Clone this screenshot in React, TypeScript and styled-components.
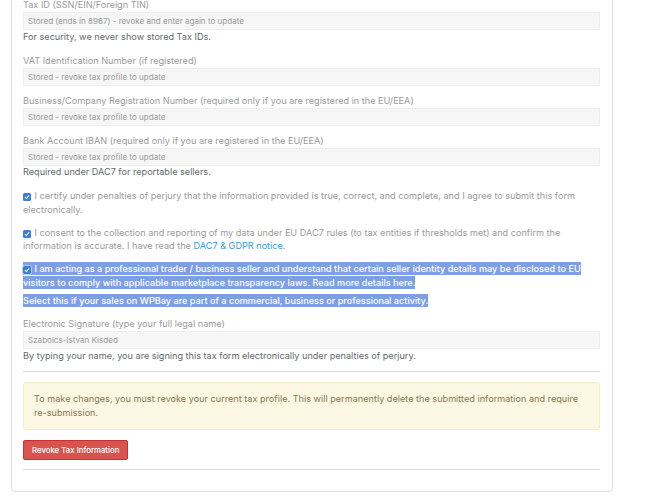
import React from 'react';
import styled, { createGlobalStyle } from 'styled-components';

const GlobalStyle = createGlobalStyle`
  body {
    margin: 0;
    background: #fff;
    font-family: 'Inter', 'Liberation Sans', sans-serif;
  }
`;

const Page = styled.div`
  padding: 0 33px 8px 11px;
  overflow: hidden;
`;

// the panel is scrolled, its top edge is out of view
const Card = styled.div`
  margin-top: -20px;
  border: 1px solid #dcdcdc;
  border-radius: 0 0 4px 4px;
  padding: 17px 12px 21px 11px;
  background: #fff;
`;

const Field = styled.div<{ $gap: number }>`
  margin-bottom: ${(p) => p.$gap}px;
`;

const Label = styled.div`
  font-size: 9.13px;
  line-height: 13px;
  color: #9a9a9a;
  margin-bottom: 1px;
`;

const Input = styled.div`
  box-sizing: border-box;
  height: 18px;
  padding: 0 4px;
  display: flex;
  align-items: center;
  background: #f6f6f6;
  border: 1px solid #eeeeee;
  font-size: 8.05px;
  color: #9a9a9a;
`;

const Help = styled.div`
  font-size: 9.13px;
  line-height: 13px;
  margin-top: -0.5px;
  color: #626a6a;
`;

const Check = styled.p<{ $selected?: boolean }>`
  margin: 0 0 ${(p) => (p.$selected ? '5px' : '9.5px')};
  font-size: 9.13px;
  line-height: 13.5px;
  color: ${(p) => (p.$selected ? '#fff' : '#9a9a9a')};
  font-weight: ${(p) => (p.$selected ? 500 : 400)};
`;

const Selected = styled.span`
  background: #7f9fe3;
  color: #fff;
  padding: 1px 0;
`;

const Box = styled.span<{ $selected?: boolean }>`
  display: inline-flex;
  align-items: center;
  justify-content: center;
  box-sizing: border-box;
  width: 8px;
  height: 8px;
  margin-right: 3.5px;
  border-radius: 1.5px;
  background: #3c7fd9;
  outline: ${(p) => (p.$selected ? '1px solid #b9cdf3' : 'none')};
  vertical-align: -1px;
`;

const Link = styled.a`
  color: #3a97d4;
  text-decoration: none;
`;

const Note = styled.p`
  margin: 0 0 10px;
  font-size: 9.13px;
  font-weight: 500;
  line-height: 13px;
`;

const Rule = styled.hr`
  border: none;
  border-top: 1px solid #d9d9d9;
  margin: 0;
`;

const Alert = styled.div`
  margin: 10px 0 10px;
  padding: 9px 10px;
  background: #fcf7e2;
  border: 1px solid #f6ecc9;
  border-radius: 3px;
  font-size: 9.13px;
  line-height: 14px;
  color: #8a7753;
`;

const NoBreak = styled.span`
  white-space: nowrap;
`;

const Button = styled.button`
  display: block;
  height: 20px;
  padding: 0 8px;
  margin-bottom: 9px;
  background: #d9534f;
  border: 1px solid #c8322e;
  border-radius: 2px;
  color: #fff;
  font-family: 'Inter', 'Liberation Sans', sans-serif;
  font-size: 7.8px;
  font-weight: 500;
`;

const Tick: React.FC<{ selected?: boolean }> = ({ selected }) => (
  <Box $selected={selected}>
    <svg width="6" height="6" viewBox="0 0 10 10">
      <path d="M1.5 5.2 L4 7.6 L8.6 2.4" fill="none" stroke="#fff" strokeWidth="1.8" />
    </svg>
  </Box>
);

const fields = [
  {
    label: 'Tax ID (SSN/EIN/Foreign TIN)',
    value: 'Stored (ends in 8967) - revoke and enter again to update',
    help: 'For security, we never show stored Tax IDs.',
    gap: 11,
  },
  { label: 'VAT Identification Number (if registered)', value: 'Stored - revoke tax profile to update', gap: 8 },
  {
    label: 'Business/Company Registration Number (required only if you are registered in the EU/EEA)',
    value: 'Stored - revoke tax profile to update',
    gap: 8,
  },
  {
    label: 'Bank Account IBAN (required only if you are registered in the EU/EEA)',
    value: 'Stored - revoke tax profile to update',
    help: 'Required under DAC7 for reportable sellers.',
    gap: 11,
  },
];

const App: React.FC = () => {
  return (
    <Page>
      <GlobalStyle />
      <Card>
        {fields.map((f) => (
          <Field key={f.label} $gap={f.gap}>
            <Label>{f.label}</Label>
            <Input>{f.value}</Input>
            {f.help && <Help>{f.help}</Help>}
          </Field>
        ))}

        <Check>
          <Tick />
          I certify under penalties of perjury that the information provided is true, correct, and complete, and I
          agree to submit this form electronically.
        </Check>
        <Check>
          <Tick />
          I consent to the collection and reporting of my data under EU DAC7 rules (to tax entities if thresholds met)
          and confirm the information is accurate. I have read the <Link href="#">DAC7 &amp; GDPR notice</Link>.
        </Check>
        <Check $selected>
          <Selected>
            <Tick selected />
            I am acting as a professional trader / business seller and understand that certain seller identity
            details may be disclosed to EU visitors to comply with applicable marketplace transparency laws. Read more
            details here.
          </Selected>
        </Check>
        <Note>
          <Selected>
            Select this if your sales on WPBay are part of a commercial, business or professional activity.
          </Selected>
        </Note>

        <Field $gap={9}>
          <Label>Electronic Signature (type your full legal name)</Label>
          <Input>Szabolcs-Istvan Kisded</Input>
          <Help>By typing your name, you are signing this tax form electronically under penalties of perjury.</Help>
        </Field>

        <Rule />
        <Alert>
          To make changes, you must revoke your current tax profile. This will permanently delete the submitted
          information and require <NoBreak>re-submission.</NoBreak>
        </Alert>
        <Button>Revoke Tax Information</Button>
        <Rule />
      </Card>
    </Page>
  );
};

export default App;
